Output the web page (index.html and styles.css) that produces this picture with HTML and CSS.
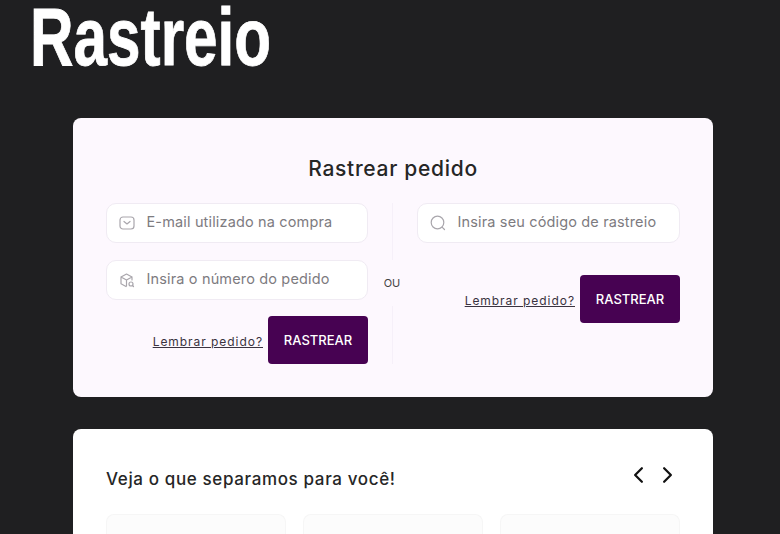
FILE: index.html
```html
<!DOCTYPE html>
<html lang="pt-BR">
<head>
<meta charset="utf-8">
<title>Rastreio</title>
<link rel="stylesheet" href="styles.css">
</head>
<body>
<div class="page">
  <h1 class="title">Rastreio</h1>
  <main class="content">
    <section class="card track">
      <h2 class="track-title">Rastrear pedido</h2>
      <div class="track-grid">
        <form class="col">
          <label class="field">
            <svg class="icon" viewBox="0 0 16 16" fill="none" stroke="currentColor" stroke-width="1.2" stroke-linecap="round" stroke-linejoin="round"><rect x="1" y="2" width="14" height="12" rx="3"/><path d="M5 6.500 8 9l3-2.500"/></svg>
            <span class="ph">E-mail utilizado na compra</span>
          </label>
          <label class="field">
            <svg class="icon" viewBox="0 0 16 16" fill="none" stroke="currentColor" stroke-width="1.2" stroke-linecap="round" stroke-linejoin="round"><path d="M7 14.500 2 11.800V5l5.500-3L13 5v3M2 5l5.500 3L13 5M7.500 8v6"/><circle cx="12" cy="12" r="2"/><path d="m13.500 13.500 1 1"/></svg>
            <span class="ph">Insira o número do pedido</span>
          </label>
          <div class="actions">
            <a class="remember" href="#">Lembrar pedido?</a>
            <button class="btn" type="button">RASTREAR</button>
          </div>
        </form>
        <div class="sep"><span class="ou">OU</span></div>
        <form class="col col-right">
          <label class="field">
            <svg class="icon" viewBox="0 0 16 16" fill="none" stroke="currentColor" stroke-width="1.2" stroke-linecap="round"><circle cx="7.500" cy="7.500" r="6.300"/><path d="m12.300 12.300 2.200 2.200"/></svg>
            <span class="ph">Insira seu código de rastreio</span>
          </label>
          <div class="actions">
            <a class="remember" href="#">Lembrar pedido?</a>
            <button class="btn" type="button">RASTREAR</button>
          </div>
        </form>
      </div>
    </section>
    <section class="card picks">
      <div class="picks-head">
        <h2 class="picks-title">Veja o que separamos para você!</h2>
        <div class="arrows">
          <svg class="arrow" viewBox="0 0 12 16" fill="none" stroke="currentColor" stroke-width="2" stroke-linecap="round" stroke-linejoin="round"><path d="M9 2 3 8l6 6"/></svg>
          <svg class="arrow" viewBox="0 0 12 16" fill="none" stroke="currentColor" stroke-width="2" stroke-linecap="round" stroke-linejoin="round"><path d="m3 2 6 6-6 6"/></svg>
        </div>
      </div>
      <div class="products">
        <div class="product"></div>
        <div class="product"></div>
        <div class="product"></div>
      </div>
    </section>
  </main>
</div>
</body>
</html>
```
FILE: styles.css
```css
* { box-sizing: border-box; }
html, body { margin: 0; height: 534px; overflow: hidden; }
body { background: #1f1f21; font-family: "Inter", "Liberation Sans", sans-serif; color: #222; }
.page { display: flex; flex-direction: column; }
.title {
  margin: 0 0 0 30px;
  width: 340px;
  height: 117.500px;
  font-family: "Liberation Sans", sans-serif;
  font-weight: 700;
  font-size: 82px;
  line-height: 74px;
  color: #fff;
  -webkit-text-stroke: 0.8px #fff;
  transform: scaleX(0.735);
  transform-origin: left top;
  white-space: nowrap;
}
.content { margin-left: 73px; width: 640px; display: flex; flex-direction: column; gap: 32px; }
.card { border-radius: 8px; padding: 0 33px; }
.track { background: #fdf8fe; height: 279.500px; padding-top: 38.500px; }
.track-title { margin: 0 0 21px; text-align: center; font-size: 21px; line-height: 26px; font-weight: 500; letter-spacing: 0.7px; color: #262626; }
.track-grid { display: grid; grid-template-columns: 262px 49px 263px; height: 161px; }
.col { display: flex; flex-direction: column; gap: 17px; }
.col-right { gap: 32px; }
.col-right .actions { margin-top: 0; }
.field {
  height: 40px; display: flex; align-items: center; gap: 12px; padding: 0 12px;
  background: #fff; border: 1px solid #f0ebf3; border-radius: 10px; color: #a9a6ac;
}
.icon { width: 16px; height: 16px; flex: none; margin-top: -1px; }
.ph { font-family: "Inter", sans-serif; font-size: 14.500px; line-height: 20px; margin-top: -3px; margin-left: -0.5px; letter-spacing: 0.15px; color: #7d7b7f; white-space: nowrap; }
.actions { display: flex; justify-content: flex-end; align-items: center; gap: 5px; margin-top: -1px; }
.remember { font-family: "Inter", sans-serif; font-size: 12px; letter-spacing: 0.95px; margin-top: 2px; color: #3a3340; text-decoration: underline; }
.btn {
  width: 100px; height: 48px; border: 0; border-radius: 4px; background: #470252; color: #fff;
  font-family: "Inter", sans-serif; font-size: 13px; font-weight: 500;
}
.sep { position: relative; display: flex; justify-content: center; align-items: center; }
.sep::before { content: ""; position: absolute; left: 24px; top: 0; bottom: 0; width: 1px; background: #f6f0f9; }
.ou { position: relative; background: #fdf8fe; padding: 16px 0; margin: -2px 0 0 -1px; font-size: 11px; color: #444; font-family: "Inter", sans-serif; }
.picks { background: #fff; height: 104.500px; padding-top: 37.500px; border-radius: 8px 8px 0 0; }
.picks-head { display: flex; justify-content: space-between; align-items: flex-start; height: 47px; }
.picks-title { margin: 0; font-size: 17px; line-height: 24px; font-weight: 500; letter-spacing: 0.63px; color: #262626; }
.arrows { display: flex; gap: 12px; margin: -1px 4px 0 0; color: #111; }
.arrow { width: 17px; height: 18px; }
.products { display: grid; grid-template-columns: repeat(3, 180px); gap: 17px; }
.product { height: 20px; background: #fcfcfc; border: 1px solid #f6f6f6; border-radius: 8px 8px 0 0; border-bottom: 0; }
```
